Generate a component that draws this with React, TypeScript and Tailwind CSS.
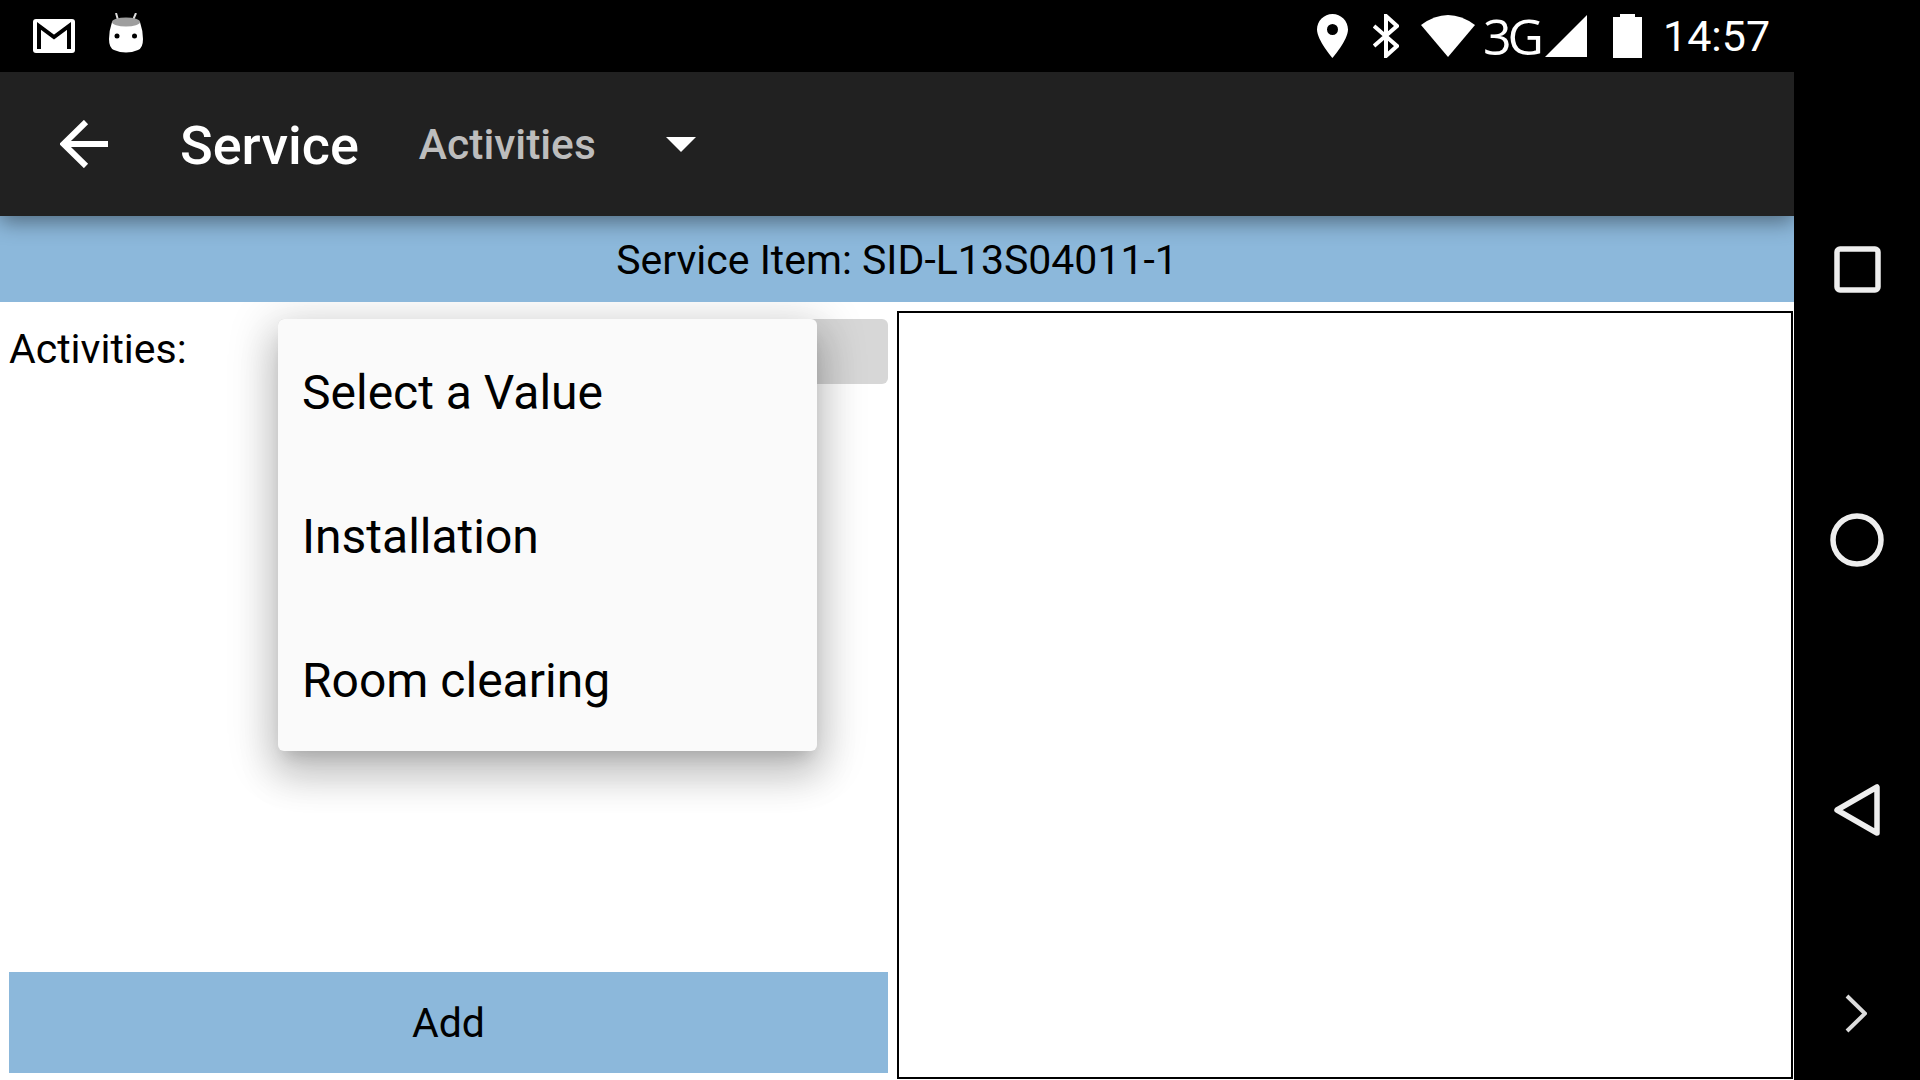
const MENU_ITEMS = ['Select a Value', 'Installation', 'Room clearing']

function StatusIcons() {
  return (
    <div className="flex items-center">
      {/* location */}
      <svg width="31" height="44" viewBox="0 0 31 44" className="ml-[1317px] shrink-0">
        <path
          fillRule="evenodd"
          fill="#fff"
          d="M15.5 0C7 0 0 7 0 15.500C0 26 15.500 44 15.500 44S31 26 31 15.500C31 7 24 0 15.500 0ZM15.500 10a5.500 5.500 0 1 1 0 11a5.500 5.500 0 1 1 0-11Z"
        />
      </svg>
      {/* bluetooth */}
      <svg width="26" height="44" viewBox="0 0 26 44" className="ml-[25px] shrink-0">
        <path d="M1 12L24 32L13 42V2L24 12L1 32" fill="none" stroke="#fff" strokeWidth="4" />
      </svg>
      {/* wifi */}
      <svg width="54" height="42" viewBox="0 0 54 42" className="ml-[22px] shrink-0">
        <path d="M0 10Q27-10 54 10L27 42Z" fill="#fff" />
      </svg>
      <span className="ml-[8px] w-[58px] text-[50px] leading-none tracking-[-4px] font-normal text-white font-['Open_Sans',sans-serif]">
        3G
      </span>
      {/* signal */}
      <svg width="42" height="42" viewBox="0 0 42 42" className="ml-[4px] shrink-0">
        <path d="M0 42L42 0V42Z" fill="#fff" />
      </svg>
      {/* battery */}
      <svg width="29" height="44" viewBox="0 0 29 44" className="ml-[26px] shrink-0">
        <path d="M7 0H22V3H29V44H0V3H7Z" fill="#fff" />
      </svg>
      <span className="ml-[21px] text-[43px] leading-none text-white font-['Roboto',sans-serif]">14:57</span>
    </div>
  )
}

export default function App() {
  return (
    <div className="flex h-[1080px] w-[1920px] flex-col overflow-hidden bg-black font-['Roboto',sans-serif] text-black">
      <div className="relative flex h-[72px] shrink-0 items-center">
        <svg width="42" height="34" viewBox="0 0 42 34" className="absolute left-[33px] top-[19px]">
          <rect width="42" height="34" rx="3" fill="#fff" />
          <path d="M6 30V7L21 18L36 7V30" fill="none" stroke="#000" strokeWidth="4" />
        </svg>
        <svg width="34" height="40" viewBox="0 0 34 40" className="absolute left-[109px] top-[13px]">
          <path d="M7 0L9 7M27 0L24 7" stroke="#ddd" strokeWidth="2" />
          <path d="M3 9Q0 18 0 26Q0 35 5 37Q17 42 29 37Q34 35 34 26Q34 18 31 9Z" fill="#fff" />
          <ellipse cx="17" cy="9" rx="14" ry="4.500" fill="#9e9e9e" />
          <circle cx="8" cy="23" r="2.500" fill="#000" />
          <circle cx="25.500" cy="23" r="2.500" fill="#000" />
        </svg>
        <StatusIcons />
      </div>

      <div className="flex min-h-0 flex-1">
        <div className="flex w-[1794px] shrink-0 flex-col bg-white">
          <div className="relative z-20 flex h-[144px] shrink-0 items-center bg-[#212121] shadow-[0_6px_20px_rgba(0,0,0,0.42)]">
            <svg width="50" height="48" viewBox="0 0 50 48" className="ml-[60px] shrink-0">
              <path d="M48 24H5M26 2L3.500 24L26 46" fill="none" stroke="#fff" strokeWidth="6" />
            </svg>
            <span className="ml-[70px] pt-[2px] text-[54px] font-medium text-white">Service</span>
            <span className="ml-[60px] pt-[2px] text-[42.500px] font-medium text-[#bdbdbd]">Activities</span>
            <svg width="30" height="15" viewBox="0 0 30 15" className="ml-[70px] shrink-0">
              <path d="M0 0H30L15 15Z" fill="#fff" />
            </svg>
          </div>

          <div className="relative z-10 flex h-[86px] shrink-0 items-center justify-center bg-[#8cb8db] pt-[4px] text-[41px]">
            Service Item: SID-L13S04011-1
          </div>

          <div className="flex min-h-0 flex-1">
            <div className="flex w-[897px] shrink-0 flex-col px-[9px] pt-[17px] pb-[7px]">
              <div className="flex h-[65px] shrink-0">
                <span className="w-[269px] shrink-0 text-[41px] leading-[60px]">Activities:</span>
                <div className="relative flex-1 rounded-[6px] bg-[#d7d7d7]">
                  <div className="absolute left-0 top-0 flex h-[432px] w-[539px] flex-col rounded-[6px] bg-[#fafafa] shadow-[0_24px_38px_3px_rgba(0,0,0,0.14),0_9px_46px_8px_rgba(0,0,0,0.16),0_11px_15px_-7px_rgba(0,0,0,0.14)]">
                    {MENU_ITEMS.map(item => (
                      <div key={item} className="flex h-[144px] items-center pt-[4px] pl-[24px] text-[48px]">
                        {item}
                      </div>
                    ))}
                  </div>
                </div>
              </div>
              <button type="button" className="mt-auto flex h-[101px] items-center justify-center bg-[#8cb8db] pt-[2px] text-[41px]">
                Add
              </button>
            </div>
            <div className="mt-[9px] mb-px h-[768px] w-[896px] border-2 border-black bg-white" />
          </div>
        </div>

        {/* android nav buttons */}
        <div className="flex flex-1 flex-col items-center pt-[174px]">
          <svg width="47" height="47" viewBox="0 0 47 47">
            <rect x="3" y="3" width="41" height="41" rx="3" fill="none" stroke="#eee" strokeWidth="5.500" />
          </svg>
          <svg width="54" height="54" viewBox="0 0 54 54" className="mt-[220px]">
            <circle cx="27" cy="27" r="24" fill="none" stroke="#eee" strokeWidth="5.500" />
          </svg>
          <svg width="46" height="52" viewBox="0 0 46 52" className="mt-[217px]">
            <path d="M3 26L43 3V49Z" fill="none" stroke="#eee" strokeWidth="5.500" strokeLinejoin="round" />
          </svg>
          <svg width="22" height="39" viewBox="0 0 22 39" className="mt-[158px] mr-[3px]">
            <path d="M2 2L20 19.500L2 37" fill="none" stroke="#ddd" strokeWidth="4" />
          </svg>
        </div>
      </div>
    </div>
  )
}
